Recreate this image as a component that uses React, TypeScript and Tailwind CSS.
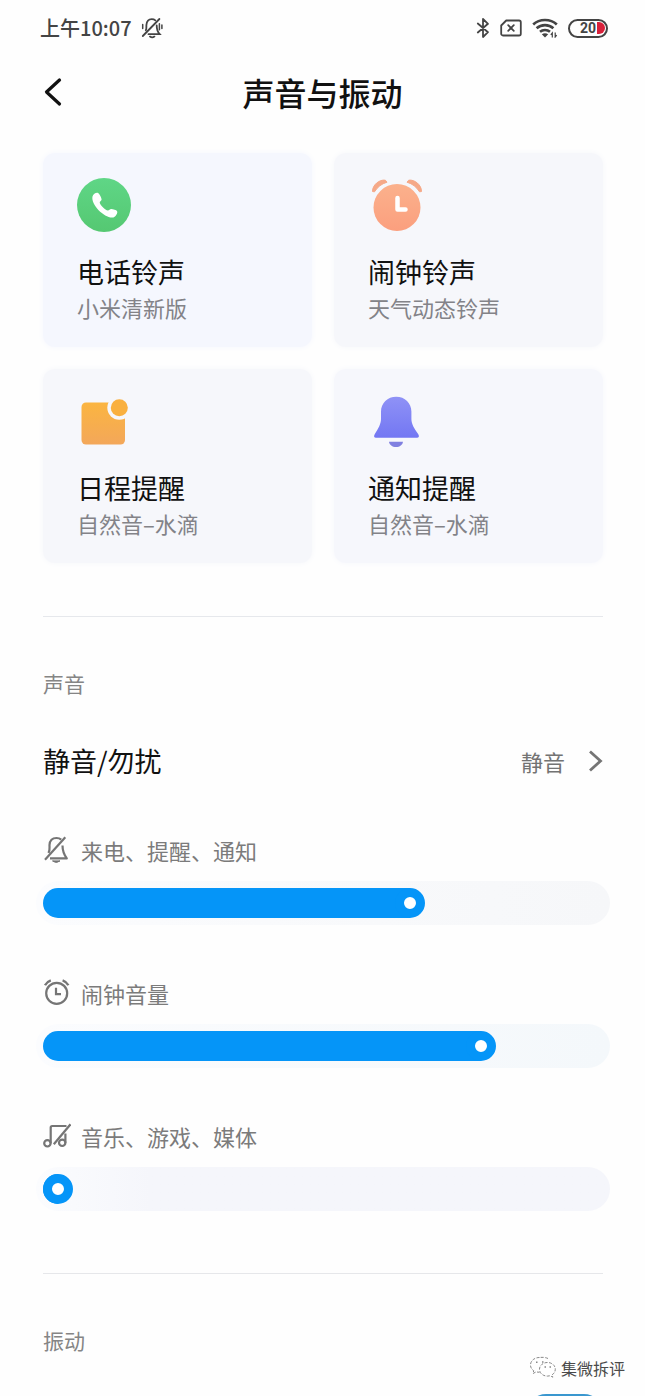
import { useState } from 'react'
import type { ReactNode } from 'react'

interface Tone {
  title: string
  value: string
  icon: ReactNode
  bg: string
}

interface VolumeProps {
  id: string
  label: string
  icon: ReactNode
  initial: number
  track: string
}

function MutedBellSmall() {
  return (
    <svg width="22" height="22" viewBox="0 0 22 22" fill="none" stroke="#444" strokeWidth="1.8" strokeLinecap="round">
      <path d="M1.8 19L18.4 2" />
      <path d="M4.800 13.200C5.800 11.500 5.200 10 5.400 8c.3-3.500 2.400-5.800 5.300-5.800 1.400 0 2.700.4 3.600 1.200" />
      <path d="M15.700 8.500c0 3.800.5 6 3 8.700H7.500" />
      <path d="M9 19.600q2.200 1.500 4.400 0" />
      <path d="M1.700 7.500v4M18.400 6.800v6M20.900 8v3.500" strokeWidth="1.500" />
    </svg>
  )
}

function BluetoothIcon() {
  return (
    <svg width="14" height="22" viewBox="0 0 14 22" fill="none" stroke="#444" strokeWidth="1.8" strokeLinejoin="round" strokeLinecap="round">
      <path d="M1.800 6.500L12 15.200 7 20V2l5 4.800L1.800 15.500" />
    </svg>
  )
}

function NoSimIcon() {
  return (
    <svg width="22" height="18" viewBox="0 0 22 18" fill="none" stroke="#444" strokeWidth="1.8" strokeLinejoin="round" strokeLinecap="round">
      <path d="M6.200 1.500H19a1.800 1.800 0 011.800 1.800v11.400A1.800 1.800 0 0119 16.500H3a1.800 1.800 0 01-1.800-1.800V6.500z" />
      <path d="M8.200 6.200l5.600 5.600M13.800 6.200l-5.600 5.600" />
    </svg>
  )
}

function WifiIcon() {
  return (
    <svg width="26" height="20" viewBox="0 0 26 20" fill="none" stroke="#444" strokeWidth="2.600">
      <path d="M1.200 6.500C7.500.4 18.500.4 24.800 6.500" />
      <path d="M4.600 10.300c4.600-4.300 12.200-4.300 16.800 0" />
      <path d="M8 13.800c2.800-2.500 7.200-2.500 10 0" />
      <path d="M9.800 16.200q3.200-2 6.400 0L13 19.400z" fill="#444" stroke="none" />
      <path d="M20.300 19.500V15l-1.500 1.800M23.200 14.500V19l1.500-1.800" strokeWidth="1.200" />
    </svg>
  )
}

function PhoneTile() {
  return (
    <svg width="54" height="54" viewBox="0 0 54 54">
      <defs>
        <linearGradient id="phoneFill" x1="0" y1="0" x2="0" y2="1">
          <stop offset="0" stopColor="#5fd686" />
          <stop offset="1" stopColor="#55c872" />
        </linearGradient>
      </defs>
      <circle cx="27" cy="27" r="27" fill="url(#phoneFill)" />
      <path
        d="M15.500 18.500c.6-2.400 3.200-4.100 5-3.800 1.800.5 3.800 4.600 4.100 6.700.1 1.300-1.900 1.900-1.900 3.200.2 2.200 5.600 7.800 8.200 8 1.300 0 1.900-1.500 3.300-1.500 1.900 0 5.300.9 6 2.300.6 1.700-1.600 5.200-3.800 6-7.500 1.800-22.800-12-20.900-20.900z"
        fill="#fff"
      />
    </svg>
  )
}

function AlarmTile() {
  return (
    <svg width="54" height="54" viewBox="0 0 54 54" fill="none">
      <defs>
        <linearGradient id="alarmFill" x1="0" y1="0" x2="0" y2="1">
          <stop offset="0" stopColor="#fbb18c" />
          <stop offset="1" stopColor="#fb9f7e" />
        </linearGradient>
      </defs>
      <circle cx="29" cy="29.500" r="23.500" fill="url(#alarmFill)" />
      <path
        d="M4.500 13.500C4.300 7 11.500 1.200 17.300 2.200L19 4.200C13.500 5.800 9.500 9 6.500 13.800zM53.500 13.500C53.700 7 46.500 1.200 40.700 2.200L39 4.200c5.500 1.600 9.500 4.800 12.500 9.600z"
        fill="#f5a988"
        stroke="#f5a988"
        strokeWidth="1"
        strokeLinejoin="round"
      />
      <path d="M29.500 20v11.500h8" stroke="#fff" strokeWidth="4.500" strokeLinejoin="round" strokeLinecap="round" />
    </svg>
  )
}

function CalendarTile({ halo }: { halo: string }) {
  return (
    <svg width="54" height="54" viewBox="0 0 54 54">
      <defs>
        <linearGradient id="dayFill" x1="0" y1="0" x2="0" y2="1">
          <stop offset="0" stopColor="#fbb540" />
          <stop offset="1" stopColor="#f3a75a" />
        </linearGradient>
      </defs>
      <rect x="4.500" y="8.500" width="43.500" height="42" rx="4.500" fill="url(#dayFill)" />
      <circle cx="42.300" cy="13.700" r="12" fill={halo} />
      <circle cx="42.300" cy="13.700" r="8.500" fill="#f9b03f" />
    </svg>
  )
}

function BellTile() {
  return (
    <svg width="54" height="54" viewBox="0 0 54 54">
      <defs>
        <linearGradient id="bellFill" x1="0" y1="0" x2="0" y2="1">
          <stop offset="0" stopColor="#8f92f6" />
          <stop offset="1" stopColor="#7377f3" />
        </linearGradient>
      </defs>
      <path
        d="M28.200 2.700C19.500 2.700 13 9 13 17.500V25c0 5-2.500 9-6.300 15.200-1.200 2-.6 3.500 1.300 3.500h41c1.900 0 2.500-1.500 1.300-3.500C46 34 43.400 30 43.400 25v-7.500c0-8.500-6.500-14.800-15.200-14.800z"
        fill="url(#bellFill)"
      />
      <path d="M21 47.700h14c-.5 3.200-3.200 5.300-7 5.300s-6.500-2.100-7-5.300z" fill="#8080e0" />
    </svg>
  )
}

function MutedBell() {
  return (
    <svg width="28" height="28" viewBox="0 0 28 28" fill="none" stroke="#757575" strokeWidth="2.200">
      <path d="M2 23.800L22.300 1.200" />
      <path d="M5.500 17C7.200 14 6.400 11.500 6.500 9c.3-4.400 3-7 7-7 2 0 3.600.6 4.700 1.600" />
      <path d="M19.500 9.500c0 5.500.8 8.200 4.300 12.800H7" strokeLinejoin="round" />
      <path d="M9.500 24.900h7.500q-3.700 3-7.500 0z" fill="#757575" strokeWidth="1" />
    </svg>
  )
}

function AlarmClock() {
  return (
    <svg width="28" height="28" viewBox="0 0 28 28" fill="none" stroke="#757575" strokeWidth="2.200">
      <circle cx="13.700" cy="14.300" r="10.500" />
      <path d="M2 6.300Q3.800 2.800 7.800 1.400M25.400 6.300Q23.600 2.800 19.600 1.400" strokeWidth="2.400" />
      <path d="M13 8.800v6.400h5" />
    </svg>
  )
}

function MutedMusic() {
  return (
    <svg width="28" height="28" viewBox="0 0 28 28" fill="none" stroke="#757575" strokeWidth="2.200">
      <circle cx="4.400" cy="21.300" r="3.200" />
      <path d="M7.700 21.300V5.500q0-1.500 1.500-1.500h14.300" />
      <path d="M27.500 2.300L10.800 22.300" />
      <circle cx="19.200" cy="20.800" r="3.200" />
      <path d="M22.400 20.800V11.500" />
    </svg>
  )
}

const tones: Tone[] = [
  { title: '电话铃声', value: '小米清新版', icon: <PhoneTile />, bg: 'bg-[#f5f7fe] shadow-[0_0_6px_#f5f7fe]' },
  { title: '闹钟铃声', value: '天气动态铃声', icon: <AlarmTile />, bg: 'bg-[#f6f7fb] shadow-[0_0_6px_#f6f7fb]' },
  { title: '日程提醒', value: '自然音–水滴', icon: <CalendarTile halo="#f6f7fb" />, bg: 'bg-[#f6f7fb] shadow-[0_0_6px_#f6f7fb]' },
  { title: '通知提醒', value: '自然音–水滴', icon: <BellTile />, bg: 'bg-[#f6f7fc] shadow-[0_0_6px_#f6f7fc]' },
]

function ToneCard({ title, value, icon, bg }: Tone) {
  return (
    <button type="button" className={`flex flex-col items-start rounded-xl pt-[25px] pr-4 pb-6 pl-[34px] text-left ${bg}`}>
      {icon}
      <span className="mt-[22px] text-[27px] leading-[36px] text-[#111]">{title}</span>
      <span className="mt-px text-[22px] leading-[32px] text-[#838388]">{value}</span>
    </button>
  )
}

function Volume({ id, label, icon, initial, track }: VolumeProps) {
  const [value, setValue] = useState(initial)
  // The fill ends under the middle of the 30px thumb
  const stop = `calc(15px + (100% - 30px) * ${value / 100})`

  return (
    <div>
      <label htmlFor={id} className="flex h-8 gap-[10px] pt-px text-[22px] leading-[28px] text-[#7b7b7b]">
        {icon}
        {label}
      </label>
      <div className={`-mx-[7px] mt-[14px] flex h-11 items-center rounded-full bg-linear-to-r from-[#fbfcfe] px-[7px] ${track}`}>
        <input
          id={id}
          type="range"
          min={0}
          max={100}
          step="any"
          value={value}
          onChange={(e) => setValue(Number(e.target.value))}
          className="h-[30px] w-full cursor-pointer appearance-none rounded-full [&::-webkit-slider-thumb]:size-[30px] [&::-webkit-slider-thumb]:appearance-none [&::-webkit-slider-thumb]:rounded-full [&::-webkit-slider-thumb]:border-[9px] [&::-webkit-slider-thumb]:border-[#0595f8] [&::-webkit-slider-thumb]:bg-white"
          style={{ background: `linear-gradient(to right, #0595f8 ${stop}, transparent ${stop})` }}
        />
      </div>
    </div>
  )
}

export default function App() {
  const [vibrate, setVibrate] = useState(true)

  return (
    <div className="relative h-screen overflow-hidden bg-[#fefefe] font-['Noto_Sans_CJK_SC',sans-serif] text-[#111]">
      {/* Status bar */}
      <div className="flex h-14 items-center justify-between pr-[37px] pl-10 text-[#444]">
        <div className="flex items-center gap-[9px] text-[20px] leading-[28px] font-medium">
          <span>上午10:07</span>
          <MutedBellSmall />
        </div>
        <div className="flex items-center gap-[10px]">
          <BluetoothIcon />
          <NoSimIcon />
          <WifiIcon />
          <div className="flex h-[19px] w-10 items-center justify-end gap-px overflow-hidden rounded-full border-2 border-[#444] pr-px">
            <span className="font-['Roboto',sans-serif] text-[14px] leading-[14px] font-bold">20</span>
            <span className="h-3 w-2 rounded-r-full bg-[#d8203a]" />
          </div>
        </div>
      </div>

      <header className="grid h-[72px] grid-cols-[1fr_auto_1fr] items-center px-[42px]">
        <button type="button" aria-label="返回" className="justify-self-start">
          <svg width="22" height="30" viewBox="0 0 22 30" fill="none" stroke="#111" strokeWidth="3.200" strokeLinecap="round" strokeLinejoin="round">
            <path d="M17.500 3L4.500 15l13 12" />
          </svg>
        </button>
        <h1 className="text-[32px] leading-[40px] font-medium">声音与振动</h1>
      </header>

      <main className="pt-[25px] pr-[42px] pl-[43px]">
        <div className="grid grid-cols-2 gap-[22px]">
          {tones.map((t) => (
            <ToneCard key={t.title} {...t} />
          ))}
        </div>

        <hr className="mt-[53px] border-[#e6e8ec]" />

        <section>
          <h2 className="mt-[50px] text-[21px] leading-[32px] text-[#858585]">声音</h2>
          <button type="button" className="mt-[42px] flex h-10 w-full items-center">
            <span className="flex-1 text-left text-[27px] leading-[36px]">静音/勿扰</span>
            <span className="text-[22px] leading-[32px] text-[#737373]">静音</span>
            <svg className="ml-[22px]" width="16" height="24" viewBox="0 0 16 24" fill="none" stroke="#757575" strokeWidth="2.800">
              <path d="M3 2.500l10.500 9.500L3 21.500" />
            </svg>
          </button>

          <div className="mt-[54px] flex flex-col gap-[53px]">
            <Volume id="ring" label="来电、提醒、通知" icon={<MutedBell />} initial={66.5} track="to-[#f6f7f9]" />
            <Volume id="alarm" label="闹钟音量" icon={<AlarmClock />} initial={79.9} track="to-[#f4f8fb]" />
            <Volume id="media" label="音乐、游戏、媒体" icon={<MutedMusic />} initial={0} track="via-[#f5f6fb] via-20% to-[#f5f6fb]" />
          </div>
        </section>

        <hr className="mt-[62px] border-[#e6e7ea]" />

        <section>
          <h2 id="vibration" className="mt-[50px] text-[21px] leading-[32px] text-[#858585]">振动</h2>
          <div className="mt-[38px] flex justify-end">
            <input
              type="checkbox"
              role="switch"
              aria-labelledby="vibration"
              checked={vibrate}
              onChange={(e) => setVibrate(e.target.checked)}
              className="h-[38px] w-[76px] appearance-none rounded-full bg-gray-300 checked:bg-[#3a97cf]"
            />
          </div>
        </section>
      </main>

      {/* Account mark over the page corner */}
      <div className="absolute right-5 bottom-4 flex items-center gap-1">
        <svg width="28" height="24" viewBox="0 0 28 24" fill="#fff" stroke="#888" strokeWidth="1" strokeDasharray="3 1.500">
          <path d="M10.500 1.500C5.500 1.500 1.500 4.800 1.500 9c0 2.400 1.200 4.300 3.200 5.700L4 17.500l3.200-1.700c1.100.3 2.200.5 3.300.5" />
          <path d="M19 2.500c-2-1-5.500-1.500-8.500-1" fill="none" />
          <path d="M18.500 6.500c-4.600 0-8 3-8 6.800s3.400 6.800 8 6.800c1 0 1.900-.2 2.700-.4l2.600 1.500-.7-2.400c2-1.300 3.200-3.200 3.200-5.500 0-3.800-3.400-6.800-7.800-6.800z" />
          <path d="M7 6.300h1.500M13 6h1.500M15.500 11h1.500M20.500 11H22" strokeWidth="1.500" strokeDasharray="none" />
        </svg>
        <span className="text-[16px] leading-[24px] text-[#4a4a4a]">集微拆评</span>
      </div>
    </div>
  )
}
